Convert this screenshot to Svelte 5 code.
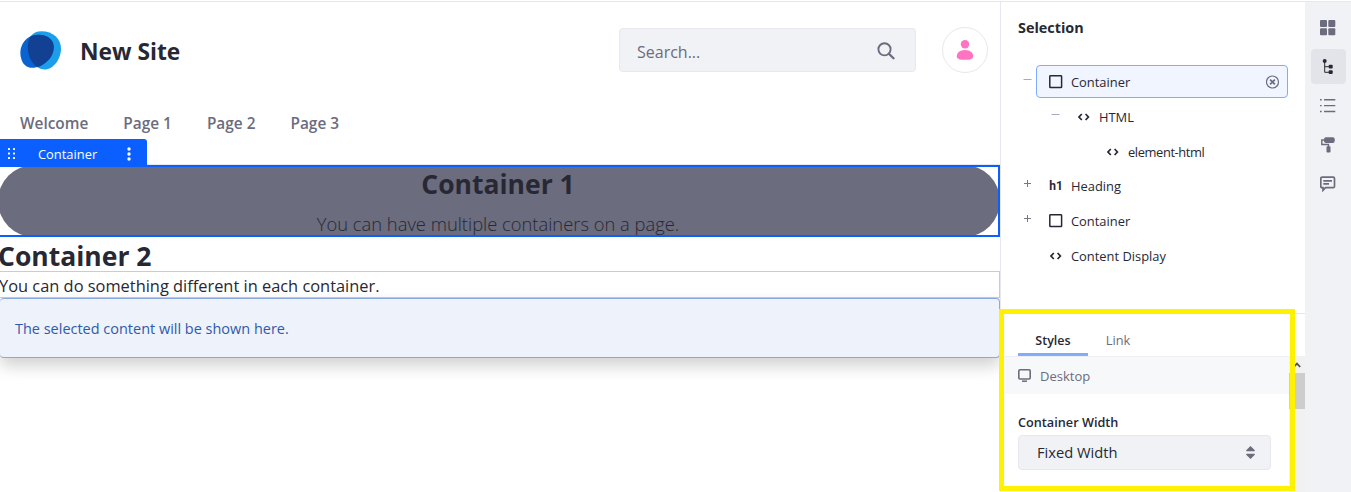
<script>
  const pages = ['Welcome', 'Page 1', 'Page 2', 'Page 3'];
  const tree = [
    { label: 'Container', icon: 'square', toggle: 'minus', level: 0, selected: true },
    { label: 'HTML', icon: 'code', toggle: 'minus', level: 1 },
    { label: 'element-html', icon: 'code', toggle: '', level: 2 },
    { label: 'Heading', icon: 'h1', toggle: 'plus', level: 0 },
    { label: 'Container', icon: 'square', toggle: 'plus', level: 0 },
    { label: 'Content Display', icon: 'code', toggle: '', level: 0 }
  ];
  const light = 'M21.500 .3C33 .3 41 8 41 17.500C41 28 33.500 38.500 24.500 38.500C15 38.500 7.800 27 7.800 17C7.800 6 12.500 .3 21.500 .3Z';
  const dark = 'M18 3.800C27 3.300 34 8.500 33.800 16.500C33.500 25 27.500 31.500 20.500 35C13 38 6 37.500 2.500 31C-1.500 23 .2 13 7 7.500C10.500 4.800 14 4 18 3.800Z';
</script>

<div class="app">
  <main>
    <header>
      <svg class="logo" width="41" height="39" viewBox="0 0 41 39">
        <clipPath id="overlap"><path d={light} /></clipPath>
        <path d={light} fill="#1c9fea" />
        <path d={dark} fill="#0b63d1" />
        <path d={dark} fill="#124194" clip-path="url(#overlap)" />
      </svg>
      <h1>New Site</h1>
      <div class="search">
        <span>Search...</span>
        <svg width="18" height="18" viewBox="0 0 18 18" fill="none" stroke="#6b6c7e">
          <circle cx="7.500" cy="7.300" r="6.100" stroke-width="1.900" />
          <path d="M11.900 11.700L16.500 16.300" stroke-width="2.300" stroke-linecap="round" />
        </svg>
      </div>
      <div class="avatar">
        <svg width="18" height="20" viewBox="0 0 18 20" fill="#ff73c3">
          <circle cx="9" cy="4.300" r="4.200" />
          <path d="M9 10C14 10 17.200 12.800 17.200 16.200C17.200 19 14.500 19.800 9 19.800S.8 19 .8 16.200C.8 12.800 4 10 9 10Z" />
        </svg>
      </div>
    </header>
    <nav>
      {#each pages as page}<a>{page}</a>{/each}
    </nav>
    <div class="tab">
      <svg width="7" height="12" viewBox="0 0 7 12" fill="#fff">
        {#each [0, 4.500, 9] as y}<rect x="0" {y} width="2" height="2" rx=".5" /><rect x="5" {y} width="2" height="2" rx=".5" />{/each}
      </svg>
      <span>Container</span>
      <svg width="4" height="14" viewBox="0 0 4 14" fill="#fff">
        {#each [2, 7, 12] as cy}<circle cx="2" {cy} r="1.700" />{/each}
      </svg>
    </div>
    <section class="box1">
      <div class="pill">
        <h2>Container 1</h2>
        <p>You can have multiple containers on a page.</p>
      </div>
    </section>
    <h2 class="head2">Container 2</h2>
    <p class="para">You can do something different in each container.</p>
    <div class="alert"><span>The selected content will be shown here.</span></div>
  </main>

  <aside>
    <h3>Selection</h3>
    <div class="tree">
      {#each tree as n}
        <div class="row l{n.level}">
          <span class="toggle">
            {#if n.toggle}
              <svg width="9" height="9" viewBox="0 0 9 9" stroke={n.toggle === 'plus' ? '#777887' : '#a7a9bc'} fill="none">
                <path d={n.toggle === 'plus' ? 'M1 4.500H8M4.500 1V8' : 'M.5 4.500H8.500'} />
              </svg>
            {/if}
          </span>
          <div class="item" class:selected={n.selected}>
            <span class="ic">
              {#if n.icon === 'square'}
                <svg width="14" height="14" viewBox="0 0 14 14" fill="none" stroke="#272833" stroke-width="1.500"><rect x=".8" y=".8" width="11.800" height="11.800" rx=".7" /></svg>
              {:else if n.icon === 'code'}
                <svg width="12" height="8" viewBox="0 0 12 8" fill="none" stroke="#272833" stroke-width="1.700"><path d="M3.800 1L1 4L3.800 7M7.600 1L10.400 4L7.600 7" /></svg>
              {:else}
                <b>h1</b>
              {/if}
            </span>
            <span class="label">{n.label}</span>
            {#if n.selected}
              <svg class="close" width="14" height="14" viewBox="0 0 14 14" fill="none" stroke="#6b6c7e"><circle cx="6.500" cy="7" r="6" stroke-width="1.200" /><path d="M4.100 4.600L8.900 9.400M8.900 4.600L4.100 9.400" stroke-width="1.700" /></svg>
            {/if}
          </div>
        </div>
      {/each}
    </div>
    <div class="props">
      <div class="tabs"><span class="active">Styles</span><span>Link</span></div>
      <div class="body">
        <div class="fields">
          <div class="desktop">
            <svg width="13" height="13" viewBox="0 0 13 13" fill="none" stroke="#6b6c7e"><rect x=".8" y=".8" width="11.400" height="9.200" rx="1.200" stroke-width="1.600" /><path d="M4 12.200H9" stroke-width="1.500" /></svg>
            <span>Desktop</span>
          </div>
          <label for="width">Container Width</label>
          <div class="select" id="width">
            <span>Fixed Width</span>
            <svg width="9" height="13" viewBox="0 0 9 13" fill="#6b6c7e"><path d="M4.500 0L8.800 4.200Q9 5.200 8.300 5.200H.7Q0 5.200.2 4.200ZM4.500 13L.2 8.800Q0 7.800.7 7.800H8.300Q9 7.800 8.800 8.800Z" /></svg>
          </div>
        </div>
        <div class="scroll">
          <div class="up"><svg width="8" height="6" viewBox="0 0 8 6" fill="none" stroke="#505050" stroke-width="1.800"><path d="M.8 5L4 1.600L7.200 5" /></svg></div>
          <div class="thumb"></div>
        </div>
      </div>
    </div>
    <div class="highlight"></div>
  </aside>

  <div class="rail">
    <div class="btn"><svg width="16" height="16" viewBox="0 0 16 16" fill="#6b6c7e"><rect x="0" y="0" width="7" height="7" rx="1" /><rect x="8.300" y="0" width="7" height="7" rx="1" /><rect x="0" y="8.300" width="7" height="7" rx="1" /><rect x="8.300" y="8.300" width="7" height="7" rx="1" /></svg></div>
    <div class="btn on"><svg width="16" height="16" viewBox="0 0 16 16" fill="#272833"><path d="M4.700 2V13.300H10M4.700 7.700H10" fill="none" stroke="#272833" stroke-width="1" /><circle cx="4.700" cy="2" r="2" /><rect x="8.700" y="5.800" width="4" height="3.800" rx="1" /><rect x="8.700" y="11.300" width="4" height="3.800" rx="1" /></svg></div>
    <div class="btn"><svg width="16" height="16" viewBox="0 0 16 16" stroke="#6b6c7e" stroke-width="1.400"><path d="M0 1.700H1.700M4 1.700H15.300M0 7.600H1.700M4 7.600H15.300M0 13.500H1.700M4 13.500H15.300" /></svg></div>
    <div class="btn"><svg width="16" height="16" viewBox="0 0 16 16" fill="#6b6c7e"><rect x="4" y=".3" width="10.700" height="5.700" rx="2" /><path d="M4 3H1.800V7.500H8.500V10" fill="none" stroke="#6b6c7e" stroke-width="1.400" /><rect x="6.500" y="9.200" width="4" height="6.300" rx=".8" /></svg></div>
    <div class="btn"><svg width="16" height="16" viewBox="0 0 16 16" fill="none" stroke="#6b6c7e" stroke-width="1.700"><path d="M2.100 1.100H13.200Q14.500 1.100 14.500 2.400V10.400Q14.500 11.700 13.200 11.700H5.500L3 14.300V11.700H2.100Q.8 11.700 .8 10.400V2.400Q.8 1.100 2.100 1.100ZM3.300 4.800H12M3.300 7.900H9" /></svg></div>
  </div>
</div>

<style>
  :global(body) { background: #fff; }
  .app { display: flex; box-sizing: border-box; width: 1351px; height: 492px; padding-top: 1px; overflow: hidden; font-family: "Open Sans", "Noto Sans", sans-serif; color: #272833; white-space: nowrap; }
  .app * { box-sizing: border-box; }
  h1, h2, h3, p { margin: 0; }
  svg { display: block; flex: none; }
  main { width: 1000px; border-top: 1px solid #e7e7ed; overflow: hidden; display: flex; flex-direction: column; }
  header { display: flex; align-items: center; height: 96px; padding: 0 12px 0 20px; flex: none; }
  .logo { margin-top: 1.500px; }
  h1 { margin-left: 19px; padding-top: 4px; font-size: 22.800px; line-height: 32px; font-weight: 700; width: 520px; }
  .search { margin-left: auto; display: flex; align-items: center; justify-content: space-between; width: 297px; height: 44px; padding: 2px 20px 0 17px; background: #f1f2f5; border: 1px solid #e7e7ed; border-radius: 4px; color: #6b6c7e; font-size: 16px; }
  .search span { padding-top: 2px; }
  .avatar { display: flex; align-items: center; justify-content: center; margin-left: 26px; width: 46px; height: 46px; border: 1px solid #e7e7ed; border-radius: 50%; }
  nav { display: flex; gap: 35px; padding: 15px 20px 0; height: 41px; flex: none; font-size: 15.400px; line-height: 22px; font-weight: 600; color: #6b6c7e; }
  .tab { position: relative; z-index: 1; display: flex; align-items: center; width: 147px; height: 26px; flex: none; padding: 3px 16px 0 8px; background: #0b5fff; color: #fff; border-radius: 0 3px 0 0; font-size: 12.900px; font-weight: 500; }
  .tab span { width: 90px; padding: 0 0 0 23px; margin-right: auto; }
  .box1 { height: 72px; flex: none; overflow: hidden; position: relative; box-shadow: 0 -1px #e3e7ee; }
  .box1::after { content: ""; position: absolute; inset: 0; border: 2px solid #0b5fff; border-left-width: 0; }
  .pill { width: 1002px; height: 72px; margin-left: -2px; border-radius: 36px; background: #6b6c7e; text-align: center; padding: 1px 2px 0 0; }
  h2 { font-size: 26.500px; line-height: 36px; font-weight: 700; }
  .pill p { font-size: 18.350px; line-height: 30px; margin-top: 7px; font-weight: 300; }
  .head2 { height: 34px; line-height: 38px; flex: none; margin-left: -2px; }
  .para { height: 27px; flex: none; border: 1px solid #b1cfff; border-left: 0; font-size: 16.400px; line-height: 28px; text-indent: -1px; }
  .alert { height: 60px; flex: none; display: flex; align-items: center; padding-left: 15px; border: 1px solid #89a7e0; border-left: 0; border-radius: 4px; background: #eef2fa; color: #2e5aac; font-size: 14.480px; box-shadow: 0 8px 16px rgba(0, 0, 0, .18); }
  aside { position: relative; width: 305px; border-top: 1px solid #e7e7ed; border-left: 1px solid #e7e7ed; display: flex; flex-direction: column; }
  h3 { font-size: 14.400px; line-height: 22px; font-weight: 700; padding: 15px 17px 0; height: 62px; flex: none; }
  .tree { height: 249px; flex: none; display: flex; flex-direction: column; }
  .row { height: 34.700px; flex: none; display: flex; align-items: center; padding-left: 22px; padding-right: 17px; }
  .l1 { padding-left: 50px; }
  .l2 { padding-left: 79px; }
  .toggle { width: 9px; height: 14px; flex: none; padding-top: 1px; }
  .item { display: flex; align-items: center; flex: 1; height: 33px; margin-left: 4px; padding: 2px 7px 0 12px; border: 1px solid transparent; border-radius: 4px; font-size: 12.900px; font-weight: 500; }
  .l2 .item { font-weight: 400; letter-spacing: -.4px; }
  .selected { background: #f0f5ff; border-color: #80acff; }
  .ic { width: 14px; margin-right: 8px; display: flex; justify-content: center; flex: none; }
  .ic b { font-family: Roboto, sans-serif; font-size: 12px; }
  .close { margin-left: auto; }
  .props { flex: 1; border-top: 1px solid #e7e7ed; display: flex; flex-direction: column; }
  .tabs { display: flex; height: 42px; padding: 14px 17px 0; font-size: 12.800px; font-weight: 500; color: #6b6c7e; line-height: 25px; }
  .tabs span { width: 60px; text-align: center; height: 28px; }
  .tabs .active { width: 70px; border-bottom: 3px solid #80acff; color: #272833; font-weight: 600; font-size: 12.500px; }
  .body { flex: 1; display: flex; }
  .fields { width: 288px; border-top: 1px solid #eeeff3; }
  .desktop { display: flex; align-items: center; gap: 9px; height: 37px; padding-left: 17px; background: #f7f8f9; color: #6b6c7e; font-size: 13px; font-weight: 500; }
  label { display: block; margin: 18px 17px 0; font-size: 12.700px; line-height: 20px; height: 23px; font-weight: 600; }
  .select { display: flex; align-items: center; justify-content: space-between; margin-left: 17px; width: 253px; height: 35px; padding: 0 15px 0 18px; background: #f1f2f5; border: 1px solid #e7e7ed; border-radius: 4px; font-size: 14.700px; }
  .select span { padding-bottom: 2px; }
  .scroll { flex: 1; background: #f1f1f1; }
  .up { height: 17px; display: flex; align-items: center; justify-content: center; }
  .thumb { height: 36px; background: #cdcdcd; }
  .highlight { position: absolute; left: -2px; top: 307px; width: 296px; height: 182px; border: 5px solid #fff200; }
  .rail { width: 46px; margin-top: 1px; padding: 8px 5px 0 6px; background: #f1f2f5; display: flex; flex-direction: column; gap: 4px; box-shadow: 0 -1px #e7e7ed; }
  .btn { height: 35px; flex: none; display: flex; align-items: center; justify-content: center; padding-right: 1px; border-radius: 4px; }
  .on { background: #e2e4e9; }
</style>
